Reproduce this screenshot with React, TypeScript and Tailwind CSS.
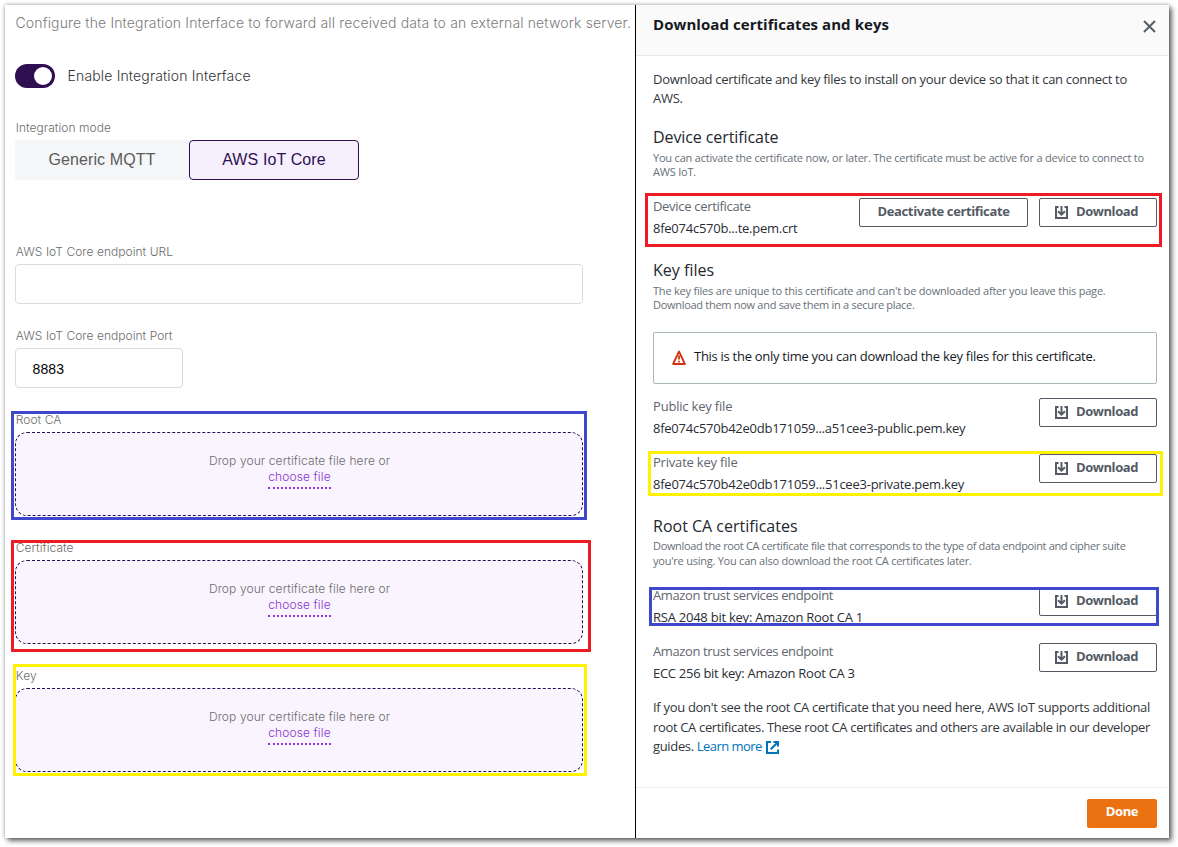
import type { ReactNode } from "react";

function DownloadIcon() {
  return (
    <svg className="mt-[2px] h-[13px] w-[13px] shrink-0" viewBox="0 0 13 13" fill="none" stroke="#545b64" strokeWidth="2">
      <path d="M3.500 1H1v11h11V1H9.500" />
      <path d="M6.500 0v8.500M3 5.200l3.500 3.500L10 5.200" />
    </svg>
  );
}

function ExternalIcon() {
  return (
    <svg className="ml-[4px] inline h-[13px] w-[13px] align-[-3px]" viewBox="0 0 13 13" fill="none" stroke="#0073bb" strokeWidth="2">
      <path d="M5 1H1v11h11V8.500" />
      <path d="M7.500 1H12v4.500M12 1L4.800 8.200" />
    </svg>
  );
}

function WarningIcon() {
  return (
    <svg className="mb-[2px] h-[15px] w-[14px] shrink-0" viewBox="0 0 14 15" fill="none" stroke="#d13212">
      <path d="M7 1.500L12.900 14H1.100Z" strokeWidth="1.800" strokeLinejoin="round" />
      <path d="M7 5.500v4M7 10.700v1.700" strokeWidth="1.800" />
    </svg>
  );
}

function Label({ children, className = "" }: { children: ReactNode; className?: string }) {
  return (
    <div className={`h-4 pl-[0.800px] text-xs leading-4 font-light tracking-[0.040px] text-[#6c6c6c] ${className}`}>{children}</div>
  );
}

function DropZone({ label, frame }: { label: string; frame: string }) {
  return (
    <section className="relative mt-6">
      <Label>{label}</Label>
      <div className="mt-1 h-[84px] w-[568px] rounded-xl border border-dashed border-[#2b0f54] bg-[#f9f4fd] pt-5 pl-px text-center text-xs leading-4 font-light tracking-[0.110px] text-[#6c6c6c]">
        <p>Drop your certificate file here or</p>
        <a className="inline-block h-5 border-b-2 border-dotted border-[#9338d8] text-[#8a35d0]">choose file</a>
      </div>
      <div className={`pointer-events-none absolute border-3 ${frame}`} />
    </section>
  );
}

function IntegrationPane() {
  return (
    <div className="w-[630px] shrink-0 pt-2 pl-[10px] font-[Inter,sans-serif]">
      <p className="h-5 pl-[0.500px] text-sm leading-5 font-light tracking-[0.148px] whitespace-nowrap text-[#7c7c7c]">
        Configure the Integration Interface to forward all received data to an external network server.
      </p>
      <div className="mt-[31px] flex h-6 items-center gap-3">
        <div className="flex h-6 w-10 items-center justify-end rounded-full bg-[#2f0f52] pr-[3px]">
          <div className="h-[18px] w-[18px] rounded-full bg-white" />
        </div>
        <span className="pl-[0.500px] text-sm font-light tracking-[0.160px] text-[#333]">Enable Integration Interface</span>
      </div>

      <Label className="mt-8">Integration mode</Label>
      <div className="mt-1 flex h-10 pb-0 font-['Liberation_Sans',sans-serif] text-base tracking-[0.120px]">
        <button className="w-[174px] bg-[#f5f6f8] pb-px text-[#5b5b5b]">Generic MQTT</button>
        <button className="w-[170px] rounded-[4px] border border-[#2f0f52] bg-[#f6effe] pb-px text-[#2f0f52]">AWS IoT Core</button>
      </div>

      <Label className="mt-16">AWS IoT Core endpoint URL</Label>
      <div className="mt-1 h-10 w-[568px] rounded-[4px] border border-[#dcdcdc]" />

      <Label className="mt-6">AWS IoT Core endpoint Port</Label>
      <div className="mt-1 flex h-10 w-[168px] items-center rounded-[4px] border border-[#dcdcdc] pt-[2px] pl-[16.500px] font-['Liberation_Sans',sans-serif] text-sm tracking-[0.100px] text-black">
        8883
      </div>

      <DropZone label="Root CA" frame="-top-px -left-1 h-[109px] w-[576px] border-[#3f48cc]" />
      <DropZone label="Certificate" frame="top-0 -left-1 h-[112px] w-[580px] border-[#ed1c24]" />
      <DropZone label="Key" frame="-top-1 -left-0.5 h-[112px] w-[574px] border-[#fff200]" />
    </div>
  );
}

const outlineButton =
  "flex h-[29px] items-center justify-center rounded-[2px] border border-[#545b64] bg-white pb-[3px] text-[13px] font-bold text-[#545b64]";

function DownloadButton() {
  return (
    <button className={`${outlineButton} w-[118px] gap-2 pr-[3px]`}>
      <DownloadIcon />
      <span className="tracking-[-0.430px]">Download</span>
    </button>
  );
}

function FileRow({
  label,
  value,
  className,
  labelClass,
  valueClass,
  children,
}: {
  label: string;
  value: string;
  className: string;
  labelClass: string;
  valueClass: string;
  children: ReactNode;
}) {
  return (
    <div className={`relative flex h-10 items-start justify-between text-[13px] leading-[18px] ${className}`}>
      <div>
        <div className={`text-[#5f666e] ${labelClass}`}>{label}</div>
        <div className={`mt-1 text-[#2a2d33] ${valueClass}`}>{value}</div>
      </div>
      {children}
    </div>
  );
}

function Heading({ children, className }: { children: ReactNode; className: string }) {
  return <h2 className={`h-[22px] text-base leading-[22px] text-[#24272d] ${className}`}>{children}</h2>;
}

function CertificatePane() {
  return (
    <div className="flex flex-1 flex-col border-l border-black font-['Open_Sans',sans-serif] whitespace-nowrap">
      <header className="flex h-[51px] justify-between border-b border-[#e6e8e8] bg-[#fafafa] pr-[13.500px] pl-[17px]">
        <h1 className="pt-[9px] text-[15px] leading-[20px] font-bold tracking-[0.060px] text-[#16191f]">Download certificates and keys</h1>
        <svg className="mt-[15px] h-[13px] w-[13px]" viewBox="0 0 13 13" fill="none" stroke="#545b64" strokeWidth="1.900">
          <path d="M1 1l11 11M12 1L1 12" />
        </svg>
      </header>

      <main className="flex-1 pt-[14px] pr-3 pl-[17px]">
        <p className="text-[13px] leading-[19px] tracking-[-0.291px] text-[#33363c]">
          Download certificate and key files to install on your device so that it can connect to
          <br />
          AWS.
        </p>

        <Heading className="mt-[18px] tracking-[-0.090px]">Device certificate</Heading>
        <p className="mt-[3px] text-[11px] leading-[14px] tracking-[-0.202px] text-[#687078]">
          You can activate the certificate now, or later. The certificate must be active for a device to connect to
          <br />
          AWS IoT.
        </p>
        <FileRow label="Device certificate" value="8fe074c570b...te.pem.crt" className="mt-[18px]" labelClass="tracking-[-0.310px]" valueClass="tracking-[-0.250px]">
          <div className="mt-px flex gap-[11px]">
            <button className={`${outlineButton} w-[169px] tracking-[-0.370px]`}>Deactivate certificate</button>
            <DownloadButton />
          </div>
          <div className="pointer-events-none absolute -top-1 -left-2 h-[54px] w-[517px] border-3 border-[#ed1c24]" />
        </FileRow>

        <Heading className="mt-[22px]">Key files</Heading>
        <p className="mt-[3px] text-[11px] leading-[14px] text-[#687078]">
          <span className="tracking-[-0.212px]">
            The key files are unique to this certificate and can't be downloaded after you leave this page.
          </span>
          <br />
          <span className="tracking-[-0.290px]">Download them now and save them in a secure place.</span>
        </p>
        <div className="mt-5 flex h-[52px] items-center gap-[8px] rounded-[2px] border border-[#aab7b8] pl-[18px] text-[13px] tracking-[-0.280px] text-[#16191f]">
          <WarningIcon />
          <span className="pb-[2px]">This is the only time you can download the key files for this certificate.</span>
        </div>

        <FileRow label="Public key file" value="8fe074c570b42e0db171059...a51cee3-public.pem.key" className="mt-[13px]" labelClass="tracking-[-0.190px]" valueClass="tracking-[-0.248px]">
          <div className="mt-px">
            <DownloadButton />
          </div>
        </FileRow>
        <FileRow label="Private key file" value="8fe074c570b42e0db171059...51cee3-private.pem.key" className="mt-4" labelClass="tracking-[-0.200px]" valueClass="tracking-[-0.240px]">
          <div className="mt-px">
            <DownloadButton />
          </div>
          <div className="pointer-events-none absolute -top-0.5 -left-[5px] h-[45px] w-[515px] border-3 border-[#fff200]" />
        </FileRow>

        <Heading className="mt-[22px]">Root CA certificates</Heading>
        <p className="mt-px text-[11px] leading-[15px] text-[#687078]">
          <span className="tracking-[-0.348px]">
            Download the root CA certificate file that corresponds to the type of data endpoint and cipher suite
          </span>
          <br />
          <span className="tracking-[-0.240px]">you're using. You can also download the root CA certificates later.</span>
        </p>
        <FileRow label="Amazon trust services endpoint" value="RSA 2048 bit key: Amazon Root CA 1" className="mt-[18px]" labelClass="tracking-[-0.382px]" valueClass="tracking-[-0.241px]">
          <div className="mt-px">
            <DownloadButton />
          </div>
          <div className="pointer-events-none absolute top-px -left-1 h-[39px] w-[510px] border-3 border-[#3f48cc]" />
        </FileRow>
        <FileRow label="Amazon trust services endpoint" value="ECC 256 bit key: Amazon Root CA 3" className="mt-4" labelClass="tracking-[-0.382px]" valueClass="tracking-[-0.280px]">
          <div className="mt-px">
            <DownloadButton />
          </div>
        </FileRow>

        <p className="mt-4 text-[13px] leading-[19.500px] text-[#33363c]">
          <span className="tracking-[-0.305px]">If you don't see the root CA certificate that you need here, AWS IoT supports additional</span>
          <br />
          <span className="tracking-[-0.342px]">root CA certificates. These root CA certificates and others are available in our developer</span>
          <br />
          <span className="tracking-[-0.340px]">guides. </span>
          <a className="tracking-[-0.540px] text-[#0073bb]">
            Learn more
            <ExternalIcon />
          </a>
        </p>
      </main>

      <footer className="flex h-[51px] items-start justify-end border-t border-[#eaeded] pt-[11px] pr-3">
        <button className="h-[29px] w-[70px] rounded-[2px] bg-[#ec7211] pb-[4px] text-[13px] font-bold tracking-[-0.400px] text-white">Done</button>
      </footer>
    </div>
  );
}

export default function App() {
  return (
    <div className="h-[847px] w-[1178px] overflow-hidden bg-white pt-[5px] pl-[5px]">
      <div className="flex h-[833px] w-[1164px] bg-white shadow-[3px_3px_5px_rgba(0,0,0,0.55),0_0_4px_rgba(0,0,0,0.35)]">
        <IntegrationPane />
        <CertificatePane />
      </div>
    </div>
  );
}
